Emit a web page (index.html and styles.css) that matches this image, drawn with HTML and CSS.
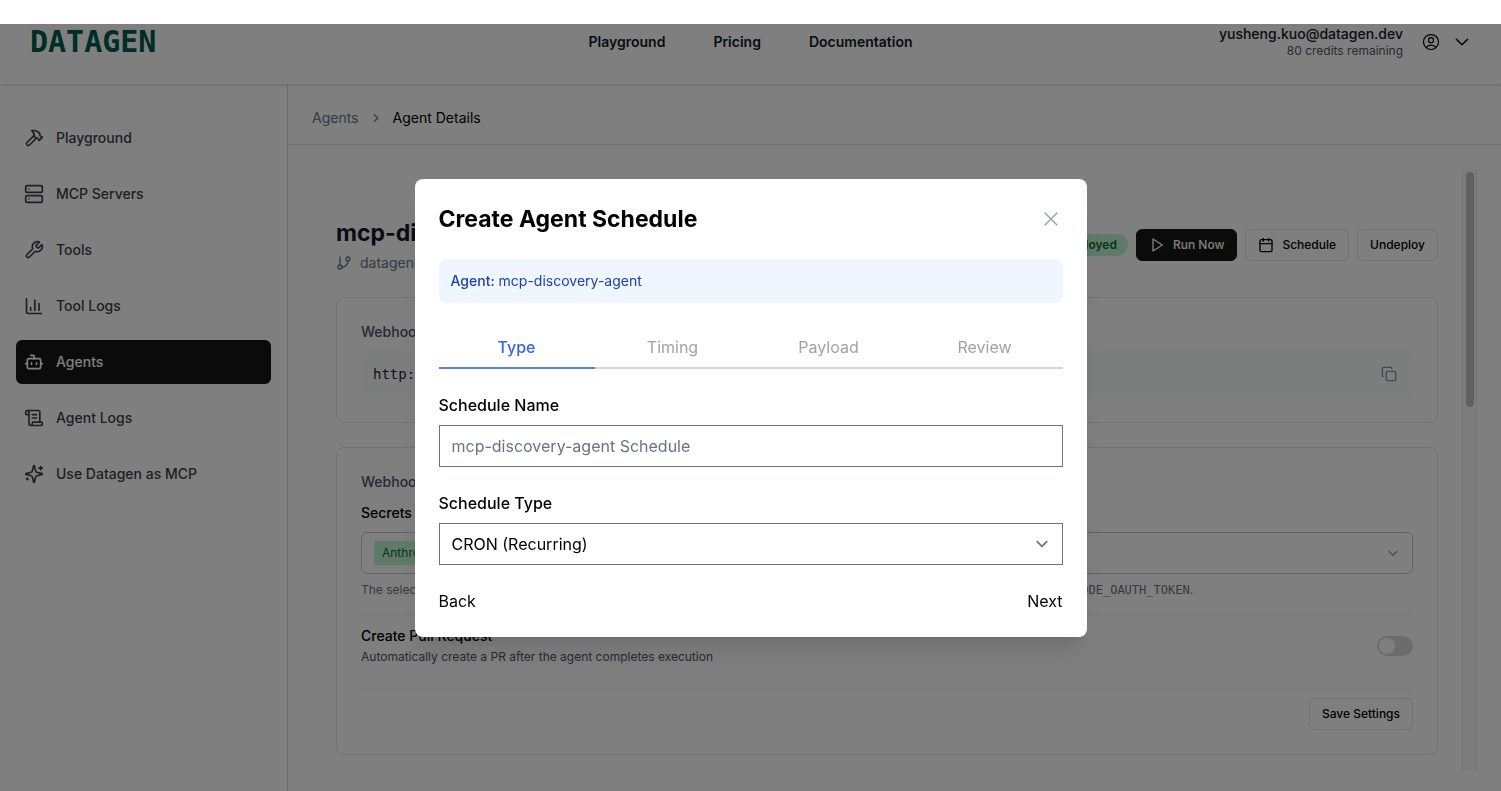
FILE: index.html
```
<!DOCTYPE html>
<html lang="en">
<head>
    <meta charset="UTF-8">
    <meta name="viewport" content="width=device-width, initial-scale=1.0">
    <title>Datagen - Agent Details</title>
    <link rel="stylesheet" href="styles.css">
</head>
<body>
    <div class="app">
        <header class="header">
            <a href="#" class="logo">DATAGEN</a>
            <nav class="top-nav">
                <a href="#">Playground</a>
                <a href="#">Pricing</a>
                <a href="#">Documentation</a>
            </nav>
            <div class="account">
                <div class="account-text">
                    <div class="account-email">yusheng.kuo@datagen.dev</div>
                    <div class="account-credits">80 credits remaining</div>
                </div>
                <button type="button" class="account-menu" aria-label="Account menu">
                    <svg width="20" height="20" viewBox="0 0 24 24" class="icon"><path d="M17.982 18.725A7.488 7.488 0 0 0 12 15.75a7.488 7.488 0 0 0-5.982 2.975m11.963 0a9 9 0 1 0-11.963 0m11.963 0A8.966 8.966 0 0 1 12 21a8.966 8.966 0 0 1-5.982-2.275M15 9.75a3 3 0 1 1-6 0 3 3 0 0 1 6 0Z"/></svg>
                    <svg width="18" height="18" viewBox="0 0 24 24" class="icon"><path d="m19.5 8.25-7.5 7.5-7.5-7.5"/></svg>
                </button>
            </div>
        </header>

        <div class="layout">
            <aside class="sidebar">
                <a href="#" class="side-link">
                    <svg width="20" height="20" viewBox="0 0 24 24" class="icon"><path d="m15 12-8.373 8.373a1 1 0 1 1-3-3L12 9"/><path d="m18 15 4-4"/><path d="m21.5 11.5-1.914-1.914A2 2 0 0 1 19 8.172V7l-2.26-2.26a6 6 0 0 0-4.202-1.756L9 2.96l.92.82A6.18 6.18 0 0 1 12 8.4V10l2 2h1.172a2 2 0 0 1 1.414.586L18.5 14.5"/></svg>
                    Playground
                </a>
                <a href="#" class="side-link">
                    <svg width="20" height="20" viewBox="0 0 24 24" class="icon"><rect x="2" y="2" width="20" height="8" rx="2"/><rect x="2" y="14" width="20" height="8" rx="2"/><path d="M6 6h.01M6 18h.01"/></svg>
                    MCP Servers
                </a>
                <a href="#" class="side-link">
                    <svg width="20" height="20" viewBox="0 0 24 24" class="icon"><path d="M14.7 6.3a1 1 0 0 0 0 1.4l1.6 1.6a1 1 0 0 0 1.4 0l3.77-3.77a6 6 0 0 1-7.94 7.94l-6.91 6.91a2.12 2.12 0 0 1-3-3l6.91-6.91a6 6 0 0 1 7.94-7.94l-3.76 3.76z"/></svg>
                    Tools
                </a>
                <a href="#" class="side-link">
                    <svg width="20" height="20" viewBox="0 0 24 24" class="icon"><path d="M3 3v16a2 2 0 0 0 2 2h16"/><path d="M18 17V9M13 17V5M8 17v-3"/></svg>
                    Tool Logs
                </a>
                <a href="#" class="side-link active">
                    <svg width="20" height="20" viewBox="0 0 24 24" class="icon"><path d="M12 8V4H8"/><rect x="4" y="8" width="16" height="12" rx="2"/><path d="M2 14h2M20 14h2M15 13v2M9 13v2"/></svg>
                    Agents
                </a>
                <a href="#" class="side-link">
                    <svg width="20" height="20" viewBox="0 0 24 24" class="icon"><path d="M15 12h-5M15 8h-5"/><path d="M19 17V5a2 2 0 0 0-2-2H4"/><path d="M8 21h12a2 2 0 0 0 2-2v-1a1 1 0 0 0-1-1H11a1 1 0 0 0-1 1v1a2 2 0 1 1-4 0V5a2 2 0 1 0-4 0v2a1 1 0 0 0 1 1h3"/></svg>
                    Agent Logs
                </a>
                <a href="#" class="side-link">
                    <svg width="20" height="20" viewBox="0 0 24 24" class="icon"><path d="M9.937 15.5A2 2 0 0 0 8.5 14.063l-6.135-1.582a.5.5 0 0 1 0-.962L8.5 9.936A2 2 0 0 0 9.937 8.5l1.582-6.135a.5.5 0 0 1 .963 0L14.063 8.5A2 2 0 0 0 15.5 9.937l6.135 1.581a.5.5 0 0 1 0 .964L15.5 14.063a2 2 0 0 0-1.437 1.437l-1.582 6.135a.5.5 0 0 1-.963 0z"/><path d="M20 3v4M22 5h-4M4 17v2M5 18H3"/></svg>
                    Use Datagen as MCP
                </a>
            </aside>

            <main class="main">
                <nav class="breadcrumb">
                    <a href="#">Agents</a>
                    <svg width="14" height="14" viewBox="0 0 24 24" class="icon"><path d="m9 18 6-6-6-6"/></svg>
                    <span class="current">Agent Details</span>
                </nav>

                <div class="scroll-area">
                    <div class="content">
                        <div class="agent-head">
                            <div>
                                <h1>mcp-discovery-agent</h1>
                                <div class="repo">
                                    <svg width="16" height="16" viewBox="0 0 24 24" class="icon"><path d="M6 3v12"/><circle cx="18" cy="6" r="3"/><circle cx="6" cy="18" r="3"/><path d="M18 9a9 9 0 0 1-9 9"/></svg>
                                    datagendev/agents
                                </div>
                            </div>
                            <div class="actions">
                                <span class="badge">Deployed</span>
                                <button type="button" class="btn btn-dark">
                                    <svg width="16" height="16" viewBox="0 0 24 24" class="icon"><path d="M6 3l14 9-14 9z"/></svg>
                                    Run Now
                                </button>
                                <button type="button" class="btn">
                                    <svg width="16" height="16" viewBox="0 0 24 24" class="icon"><path d="M8 2v4M16 2v4M3 10h18"/><rect x="3" y="4" width="18" height="18" rx="2"/></svg>
                                    Schedule
                                </button>
                                <button type="button" class="btn">Undeploy</button>
                            </div>
                        </div>

                        <section class="card">
                            <h2>Webhook URL</h2>
                            <div class="url-box">
                                <code>http://api.datagen.dev</code>
                                <button type="button" class="copy" aria-label="Copy URL">
                                    <svg width="16" height="16" viewBox="0 0 24 24" class="icon"><rect x="8" y="8" width="14" height="14" rx="2"/><path d="M4 16c-1.1 0-2-.9-2-2V4c0-1.1.9-2 2-2h10c1.1 0 2 .9 2 2"/></svg>
                                </button>
                            </div>
                        </section>

                        <section class="card">
                            <h2>Webhook Settings</h2>
                            <div class="field-title" id="secretsLabel">Secrets</div>
                            <button type="button" class="secrets" aria-haspopup="listbox" aria-labelledby="secretsLabel">
                                <span class="chip">Anthropic</span>
                                <svg width="14" height="14" viewBox="0 0 24 24" class="icon"><path d="m5 9 7 7 7-7"/></svg>
                            </button>
                            <p class="hint">The selected secret must contain a valid Anthropic credential for the agent, stored as either <code>ANTHROPIC_API_KEY</code> or <code>CLAUDE_CODE_OAUTH_TOKEN</code>.</p>

                            <div class="option">
                                <div>
                                    <label for="createPr">Create Pull Request</label>
                                    <p>Automatically create a PR after the agent completes execution</p>
                                </div>
                                <input type="checkbox" id="createPr" class="toggle">
                            </div>
                            <div class="card-foot">
                                <button type="button" class="btn">Save Settings</button>
                            </div>
                        </section>
                    </div>
                    <div class="scrollbar"><div class="thumb"></div></div>
                </div>
            </main>
        </div>
    </div>

    <!-- Schedule dialog -->
    <div class="overlay">
        <div class="modal" role="dialog" aria-modal="true" aria-labelledby="modalTitle">
            <div class="modal-head">
                <h2 id="modalTitle">Create Agent Schedule</h2>
                <button type="button" class="close" aria-label="Close">
                    <svg width="24" height="24" viewBox="0 0 24 24" class="icon"><path d="M6 18 18 6M6 6l12 12"/></svg>
                </button>
            </div>

            <div class="agent-note"><strong>Agent:</strong> mcp-discovery-agent</div>

            <div class="tabs">
                <button type="button" class="tab active">Type</button>
                <button type="button" class="tab">Timing</button>
                <button type="button" class="tab">Payload</button>
                <button type="button" class="tab">Review</button>
            </div>

            <form>
                <div class="form-group">
                    <label for="scheduleName">Schedule Name</label>
                    <input type="text" id="scheduleName" name="scheduleName" placeholder="mcp-discovery-agent Schedule">
                </div>
                <div class="form-group">
                    <label for="scheduleType">Schedule Type</label>
                    <select id="scheduleType" name="scheduleType">
                        <option>CRON (Recurring)</option>
                        <option>One-time</option>
                    </select>
                </div>
                <div class="modal-foot">
                    <button type="button">Back</button>
                    <button type="button">Next</button>
                </div>
            </form>
        </div>
    </div>
</body>
</html>
```
FILE: styles.css
```
* {
    box-sizing: border-box;
}

body {
    margin: 0;
    font-family: Inter, "Liberation Sans", sans-serif;
    font-size: 14px;
    line-height: 20px;
    color: #000;
    background-color: #fff;
}

h1, h2, p {
    margin: 0;
}

a {
    color: inherit;
    text-decoration: none;
}

button {
    padding: 0;
    border: none;
    background: none;
    font: inherit;
    color: inherit;
    cursor: pointer;
}

code {
    font-family: "DejaVu Sans Mono", monospace;
}

.icon {
    display: block;
    flex-shrink: 0;
    fill: none;
    stroke: currentColor;
    stroke-width: 2;
    stroke-linecap: round;
    stroke-linejoin: round;
}

.app {
    display: flex;
    flex-direction: column;
    height: 100vh;
    overflow: hidden;
}

/* Header */
.header {
    display: grid;
    grid-template-columns: 1fr auto 1fr;
    align-items: center;
    height: 84px;
    flex-shrink: 0;
    padding: 0 30px;
    box-shadow: 0 1px 3px rgba(0, 0, 0, 0.2);
    z-index: 1;
}

.logo {
    font-family: "DejaVu Sans Mono", monospace;
    font-size: 30px;
    line-height: 36px;
    font-weight: bold;
    color: #005a4a;
}

.top-nav {
    display: flex;
    gap: 48px;
    font-weight: 600;
    color: #111827;
}

.account {
    display: flex;
    justify-content: flex-end;
    align-items: center;
    gap: 18px;
}

.account-text {
    text-align: right;
}

.account-email {
    line-height: 18px;
    font-weight: 500;
    color: #111827;
}

.account-credits {
    font-size: 12px;
    line-height: 16px;
    color: #4b5563;
}

.account-menu {
    display: flex;
    align-items: center;
    gap: 12px;
}

.account-menu .icon:first-child {
    stroke-width: 1.5;
}

/* Sidebar */
.layout {
    display: flex;
    flex: 1;
    min-height: 0;
}

.sidebar {
    display: flex;
    flex-direction: column;
    gap: 12px;
    width: 288px;
    flex-shrink: 0;
    padding: 32px 16px;
    border-right: 1px solid #dcdce0;
}

.side-link {
    display: flex;
    align-items: center;
    gap: 12px;
    padding: 12px 8px;
    border-radius: 6px;
    font-weight: 500;
    color: #3f3f46;
}

.side-link.active {
    background-color: #171717;
    color: #fff;
}

/* Main column */
.main {
    display: flex;
    flex-direction: column;
    flex: 1;
    min-width: 0;
}

.breadcrumb {
    display: flex;
    align-items: center;
    gap: 10px;
    padding: 24px 24px 16px;
    border-bottom: 1px solid #dcdce0;
    color: #6b7280;
}

.breadcrumb .current {
    color: #000;
}

.scroll-area {
    display: flex;
    flex: 1;
    min-height: 0;
    margin: 24px 24px 20px;
}

.content {
    flex: 1;
    min-width: 0;
    padding: 48px 24px;
    overflow: hidden;
}

.scrollbar {
    width: 15px;
    padding: 3px;
    border-left: 1px solid #e8e8e8;
    border-right: 1px solid #e8e8e8;
    background-color: #fafafa;
}

.thumb {
    width: 8px;
    height: 235px;
    border-radius: 4px;
    background-color: #c1c1c1;
}

.agent-head {
    display: flex;
    justify-content: space-between;
    align-items: center;
}

.agent-head h1 {
    font-size: 23px;
    line-height: 32px;
    font-weight: 700;
    color: #111827;
}

.repo {
    display: flex;
    align-items: center;
    gap: 8px;
    margin-top: 4px;
    color: #6b7280;
}

.actions {
    display: flex;
    align-items: center;
    gap: 8px;
}

.badge {
    padding: 3px 11px;
    border-radius: 11px;
    background-color: #bbf7d0;
    color: #166534;
    font-size: 12px;
    line-height: 16px;
    font-weight: 600;
}

.btn {
    display: flex;
    align-items: center;
    gap: 8px;
    height: 32px;
    padding: 0 12px;
    border: 1px solid #e0e0e4;
    border-radius: 6px;
    font-size: 12px;
    line-height: 16px;
    font-weight: 500;
}

.btn-dark {
    border-color: #171717;
    background-color: #171717;
    color: #fff;
}

.card {
    margin-top: 24px;
    padding: 24px;
    border: 1px solid #e0e0e4;
    border-radius: 8px;
}

.card h2 {
    font-size: 14px;
    line-height: 20px;
    font-weight: 500;
    color: #4b5563;
}

.url-box {
    display: flex;
    justify-content: space-between;
    align-items: center;
    height: 48px;
    margin-top: 8px;
    padding: 0 16px 0 12px;
    border-radius: 8px;
    background-color: #f9fafb;
    color: #1f2937;
}

.copy {
    color: #8b919c;
}

.field-title {
    margin-top: 11px;
    font-weight: 500;
}

.secrets {
    display: flex;
    justify-content: space-between;
    align-items: center;
    width: 100%;
    height: 42px;
    margin-top: 9px;
    padding: 0 12px;
    border: 1px solid #c4c7cd;
    border-radius: 6px;
    color: #8b919c;
}

.chip {
    padding: 4px 8px;
    border-radius: 2px;
    background-color: #bbf7d0;
    color: #166534;
    font-size: 12px;
    line-height: 16px;
}

.hint {
    margin: 8px 0 16px;
    font-size: 12px;
    line-height: 16px;
    color: #6b7280;
    white-space: nowrap;
}

.option {
    display: flex;
    justify-content: space-between;
    align-items: center;
    padding: 11px 0 24px;
    border-top: 1px solid #f0f0f2;
}

.option label {
    display: block;
    font-weight: 500;
}

.option p {
    margin-top: 3px;
    font-size: 12px;
    line-height: 16px;
    color: #4b5563;
}

.toggle {
    appearance: none;
    width: 36px;
    height: 20px;
    margin: 0;
    padding: 2px;
    border-radius: 10px;
    background-color: #d8d8d8;
}

.toggle::before {
    content: "";
    display: block;
    width: 16px;
    height: 16px;
    border-radius: 50%;
    background-color: #fff;
}

.card-foot {
    display: flex;
    justify-content: flex-end;
    padding-top: 8px;
    border-top: 1px solid #f0f0f2;
}

/* Dialog */
.overlay {
    position: fixed;
    inset: 24px 0 0;
    z-index: 10;
    display: flex;
    align-items: center;
    justify-content: center;
    background-color: rgba(0, 0, 0, 0.5);
}

.modal {
    width: 100%;
    max-width: 672px;
    padding: 24px;
    border-radius: 8px;
    background-color: #fff;
    box-shadow: 0 20px 25px -5px rgba(0, 0, 0, 0.1), 0 8px 10px -6px rgba(0, 0, 0, 0.1);
    font-size: 16px;
    line-height: 24px;
}

.modal-head {
    display: flex;
    justify-content: space-between;
    align-items: center;
    margin-bottom: 24px;
}

.modal-head h2 {
    font-size: 23px;
    line-height: 32px;
    font-weight: 700;
}

.close {
    color: #9ca3af;
}

.close .icon {
    stroke-width: 1.5;
}

.agent-note {
    margin-bottom: 24px;
    padding: 12px;
    border-radius: 8px;
    background-color: #eff6ff;
    color: #1e40af;
    font-size: 14px;
    line-height: 20px;
}

.agent-note strong {
    font-weight: 500;
}

.tabs {
    display: flex;
    margin-bottom: 24px;
}

.tab {
    flex: 1;
    padding: 8px 0;
    border-bottom: 2px solid #d1d5db;
    color: #9ca3af;
}

.tab.active {
    border-bottom-color: #5b7fe8;
    color: #3563e9;
    font-weight: 500;
}

.form-group {
    margin-bottom: 24px;
}

.form-group label {
    display: block;
    margin-bottom: 8px;
    font-weight: 500;
}

.form-group input,
.form-group select {
    display: block;
    width: 100%;
    height: 42px;
    padding: 8px 12px;
    border: 1px solid #6b7280;
    border-radius: 0;
    background-color: #fff;
    color: #000;
    font: inherit;
}

.form-group input::placeholder {
    color: #6b7280;
}

.form-group select {
    appearance: none;
    padding-right: 40px;
    background-image: url("data:image/svg+xml,%3Csvg xmlns='http://www.w3.org/2000/svg' fill='none' viewBox='0 0 20 20'%3E%3Cpath stroke='%236b7280' stroke-linecap='round' stroke-linejoin='round' stroke-width='1.5' d='M6 8l4 4 4-4'/%3E%3C/svg%3E");
    background-position: right 8px center;
    background-repeat: no-repeat;
    background-size: 24px 24px;
}

.modal-foot {
    display: flex;
    justify-content: space-between;
}
```
